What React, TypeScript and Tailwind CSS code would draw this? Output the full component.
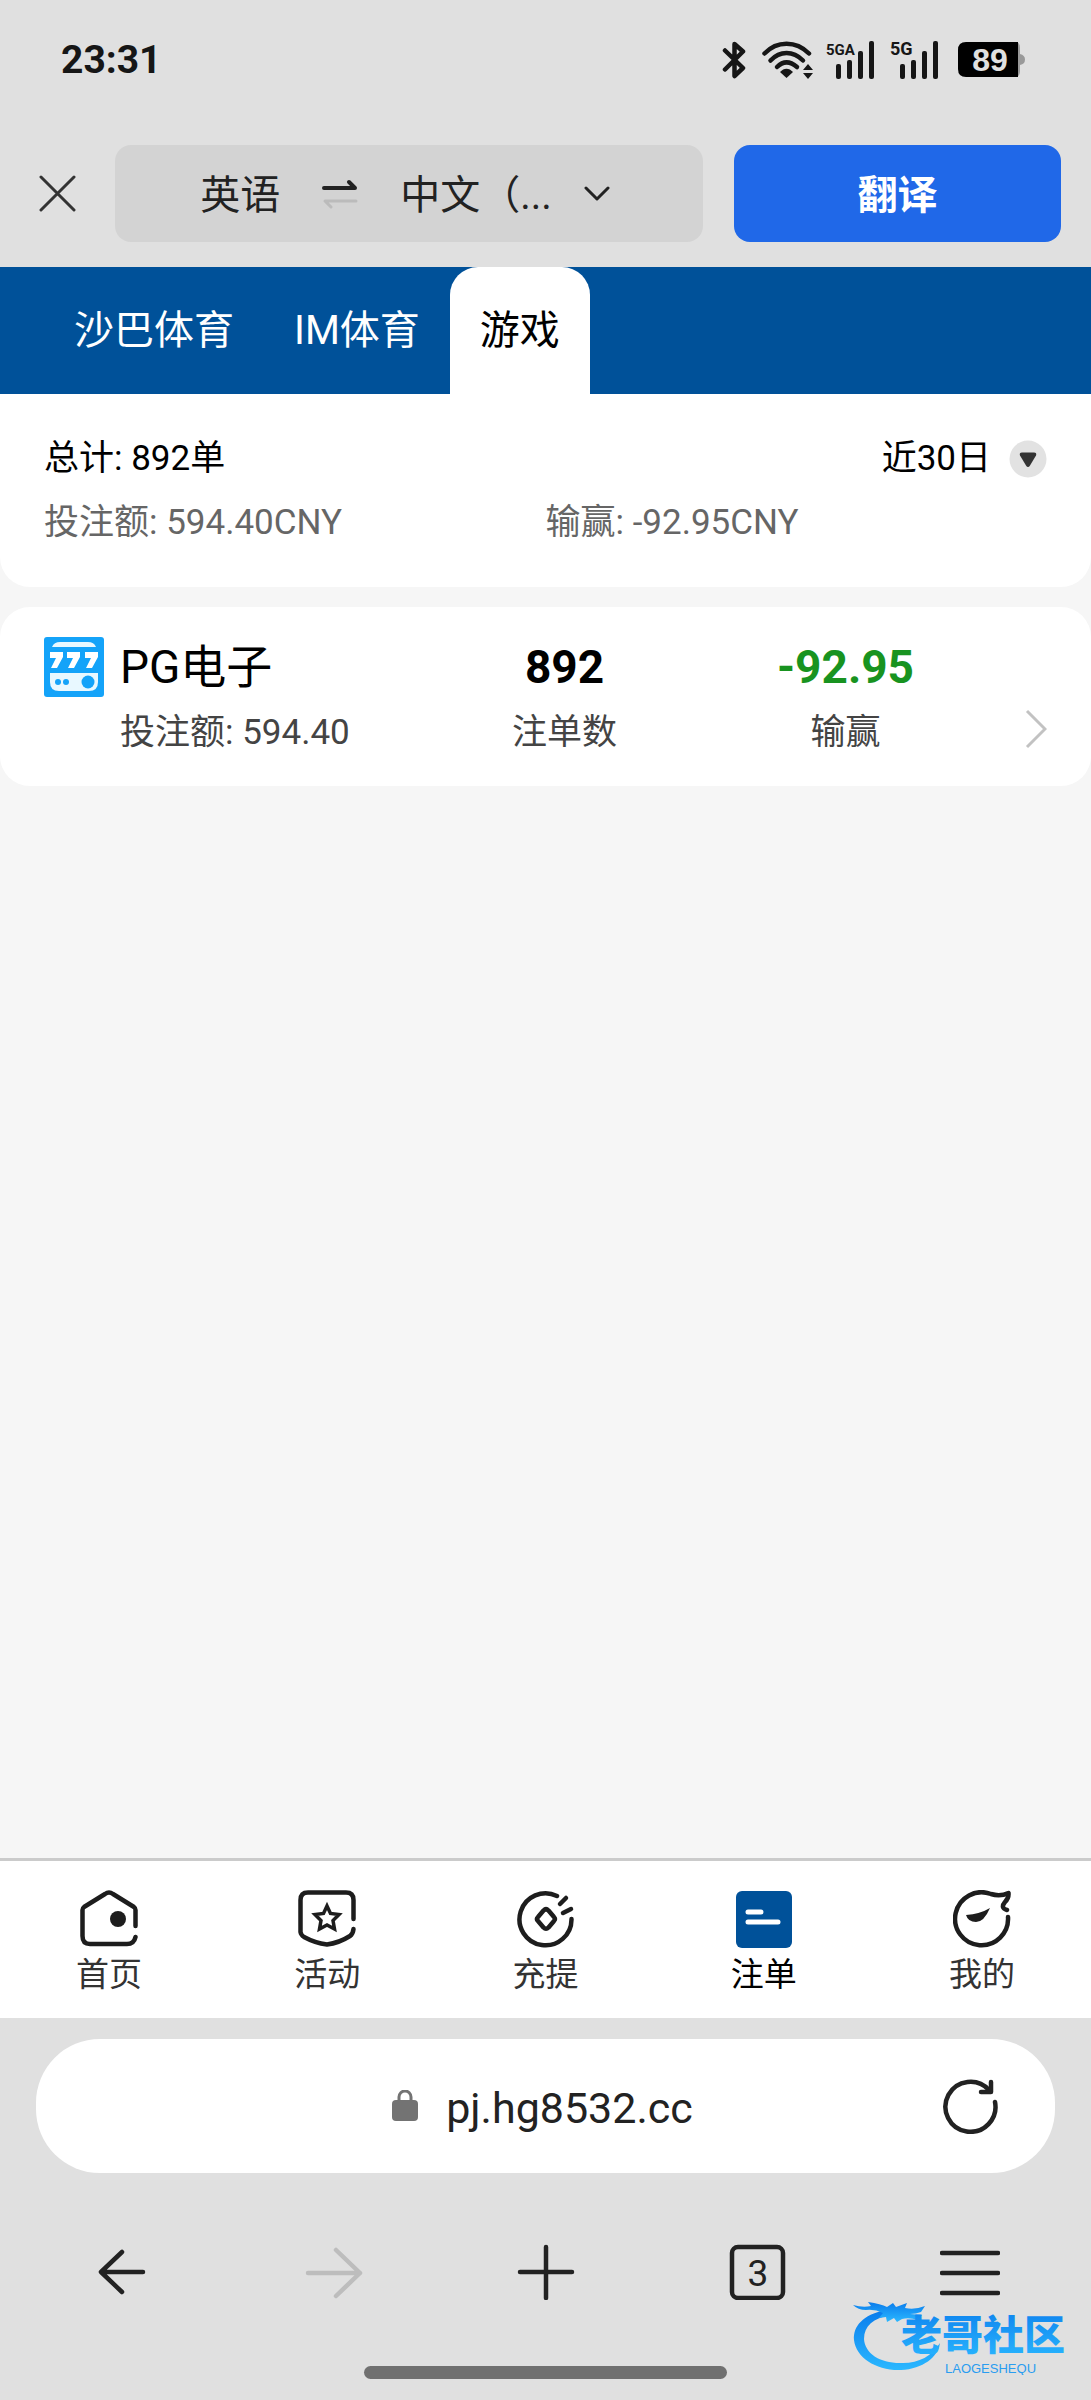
import type { ReactNode } from "react";

function BluetoothIcon() {
  return (
    <svg width="24" height="38" viewBox="0 0 24 38" fill="none" stroke="#161616" strokeWidth="4.500" strokeLinejoin="round" strokeLinecap="round">
      <path d="M3 9.500 21 27 12.500 35V3l8.500 7.500L3 28.500" />
    </svg>
  );
}

function WifiIcon() {
  return (
    <svg width="52" height="38" viewBox="0 0 52 38" fill="none" stroke="#161616" strokeWidth="4.500" strokeLinecap="round">
      <path d="M2.500 12.500C15-.5 34-.5 47 12.500" />
      <path d="M8.500 19.500C18 9.500 31 9.500 41 19.500" />
      <path d="M15 26C21 20 28 20 35 26" />
      <path d="M18 31c4-4.500 9-4.500 13 0l-6.500 6z" fill="#161616" stroke="none" />
      <path d="m41 29 5-6 5 6zM41 32h10l-5 6z" fill="#161616" stroke="none" />
    </svg>
  );
}

function SignalIcon({ label, labelSize }: { label: string; labelSize: number }) {
  return (
    <svg width="48" height="50" viewBox="0 -6 48 50" fill="#161616">
      <text x="0" y="14" fontSize={labelSize} fontWeight="700">
        {label}
      </text>
      <rect x="10" y="23" width="5" height="15" rx="2" />
      <rect x="21" y="19" width="5" height="19" rx="2" />
      <rect x="32" y="10" width="5" height="28" rx="2" />
      <rect x="43" y="0" width="5" height="38" rx="2" />
    </svg>
  );
}

function BatteryIcon() {
  return (
    <svg width="68" height="36" viewBox="0 0 68 36">
      <path d="M54 0h3q5 0 5 6v6q5 1 5 5.500t-5 5.500v6q0 6-5 6h-3z" fill="#999" />
      <path d="M8 0h52v35H8q-8 0-8-8V8q0-8 8-8z" fill="#000" />
      <text x="32" y="29" textAnchor="middle" fontSize="32" fontWeight="700" fill="#e0e0e0" fontFamily="'Liberation Sans', sans-serif">
        89
      </text>
    </svg>
  );
}

function StatusBar() {
  return (
    <div className="flex h-[120px] items-center justify-between pl-[61px] pr-[65px]">
      <span className="text-[39px] font-bold text-[#161616]">23:31</span>
      <div className="flex items-center">
        <BluetoothIcon />
        <span className="ml-4 flex">
          <WifiIcon />
        </span>
        <span className="ml-3 flex">
          <SignalIcon label="5GA" labelSize={15} />
        </span>
        <span className="ml-4 flex">
          <SignalIcon label="5G" labelSize={18} />
        </span>
        <span className="ml-5 flex">
          <BatteryIcon />
        </span>
      </div>
    </div>
  );
}

function TranslateBar() {
  return (
    <div className="flex items-center pb-[25px] pl-[39px] pr-[30px] pt-[25px] text-[40px] leading-none text-[#222]">
      <button aria-label="关闭" className="mr-[39px]">
        <svg width="37" height="37" viewBox="0 0 37 37" stroke="#333" strokeWidth="3" strokeLinecap="round">
          <path d="M2 2 35 35M35 2 2 35" />
        </svg>
      </button>
      <div className="mr-[31px] flex h-[97px] flex-[9] items-center justify-center gap-[42px] rounded-2xl bg-[#d3d3d3]">
        <button className="pt-1">英语</button>
        <button aria-label="交换语言">
          <svg width="36" height="30" viewBox="0 0 36 30" fill="none" strokeLinecap="round" strokeLinejoin="round">
            <path d="M2 9H33L27 3" stroke="#222" strokeWidth="4" />
            <path d="M34 22H3l6 6" stroke="#bbb" strokeWidth="3" />
          </svg>
        </button>
        <button className="flex items-center gap-8 pr-2">
          <span className="pt-1">中文（...</span>
          <svg width="26" height="16" viewBox="0 0 26 16" fill="none" stroke="#222" strokeWidth="3" strokeLinecap="round" strokeLinejoin="round">
            <path d="m2 2 11 11L24 2" />
          </svg>
        </button>
      </div>
      <button className="h-[97px] flex-[5] rounded-2xl bg-[#2068e8] pt-1 font-bold text-white">翻译</button>
    </div>
  );
}

const tabs = ["沙巴体育", "IM体育", "游戏"];

function Tabs() {
  return (
    <div className="flex h-[127px] bg-[#005199] pl-11 text-[40px] leading-none text-white">
      {tabs.map((tab) => (
        <button
          key={tab}
          className={tab === "游戏" ? "rounded-t-[28px] bg-white px-[30px] text-black" : "px-[30px]"}
        >
          {tab}
        </button>
      ))}
    </div>
  );
}

function Summary() {
  return (
    <section className="rounded-b-[30px] bg-white px-11 pb-8 pt-[33px] text-[35px] leading-[64px]">
      <div className="flex items-center justify-between text-black">
        <span>总计: 892单</span>
        <button className="flex items-center gap-[18px]">
          <span>近30日</span>
          <svg width="38" height="38" viewBox="0 0 38 38">
            <circle cx="19" cy="19" r="18.500" fill="#e2e2e2" />
            <path d="M13 12.500h12q3 0 2 3l-6 10q-2 3-4 0l-6-10q-1-3 2-3z" fill="#333" />
          </svg>
        </button>
      </div>
      <div className="grid grid-cols-2 text-[#666]">
        <span>投注额: 594.40CNY</span>
        <span>输赢: -92.95CNY</span>
      </div>
    </section>
  );
}

function SlotIcon() {
  return (
    <svg width="60" height="60" viewBox="0 0 60 60">
      <rect width="60" height="60" rx="3" fill="#14a3f9" />
      <path d="M8 10q2-5 8-5h28q6 0 8 5z" fill="#e8f8ff" />
      <g fill="#fff">
        <path d="M6 15h13v5l-6 11H7l5-10H6z" />
        <path d="M23 15h13v5l-6 11h-6l5-10h-6z" />
        <path d="M41 15h13v5l-6 11h-6l5-10h-6z" />
      </g>
      <path d="M6 36h48v9q0 9-9 9H15q-9 0-9-9z" fill="#e8f8ff" />
      <circle cx="14" cy="45" r="3" fill="#14a3f9" />
      <circle cx="22" cy="45" r="3" fill="#14a3f9" />
      <circle cx="44" cy="45" r="6.500" fill="#14a3f9" />
    </svg>
  );
}

function Stat({ value, label, color }: { value: string; label: string; color: string }) {
  return (
    <div className="flex flex-col items-center">
      <span className={`text-[46px] font-bold leading-[66px] ${color}`}>{value}</span>
      <span className="text-[35px] leading-[66px] text-[#444]">{label}</span>
    </div>
  );
}

function GameRow() {
  return (
    <a
      href="#pg"
      className="mt-5 grid grid-cols-[380fr_281fr_281fr_61fr] rounded-[30px] bg-white px-11 pb-5 pt-[27px]"
    >
      <div>
        <div className="flex h-[66px] items-center gap-4">
          <SlotIcon />
          <span className="text-[46px] text-black">PG电子</span>
        </div>
        <div className="pl-[76px] text-[35px] leading-[66px] text-[#444]">投注额: 594.40</div>
      </div>
      <Stat value="892" label="注单数" color="text-black" />
      <Stat value="-92.95" label="输赢" color="text-[#189320]" />
      <div className="flex items-end justify-end pb-[17px]">
        <svg width="22" height="40" viewBox="0 0 22 40" fill="none" stroke="#c2c2c2" strokeWidth="3">
          <path d="M2 2 20 20 2 38" />
        </svg>
      </div>
    </a>
  );
}

function NavItem({ label, active, children }: { label: string; active?: boolean; children: ReactNode }) {
  return (
    <a href="#nav" className="flex flex-1 flex-col items-center gap-1.5">
      <svg width="58" height="58" viewBox="0 0 58 58" fill="none" stroke="#1d1d1d" strokeWidth="4.500" strokeLinecap="round" strokeLinejoin="round">
        {children}
      </svg>
      <span className={active ? "text-[33px] leading-[42px] text-black" : "text-[33px] leading-[42px] text-[#333]"}>
        {label}
      </span>
    </a>
  );
}

function BottomNav() {
  return (
    <nav className="flex border-t-[3px] border-[#cbcbcb] bg-white pb-[22px] pt-[29px]">
      <NavItem label="首页">
        <path d="M55.500 36V20Q55.500 18 54 17L33 4Q29 1 25 4L4 17Q2.500 18 2.500 20V46Q2.500 54 10 54H47Q54 54 55.500 47" />
        <circle cx="38" cy="29" r="8" fill="#1d1d1d" stroke="none" />
      </NavItem>
      <NavItem label="活动">
        <path d="M55.500 29V10Q55.500 2.500 48 2.500H10Q2.500 2.500 2.500 10V42Q3 45 6 47Q17 53 29 54.500Q41 53 52 46Q55 44 55.500 39" />
        <path d="M29 16l3.500 7.500 8.500 1-6 6 1.500 8.500-7.500-4-7.500 4 1.500-8.500-6-6 8.500-1z" strokeWidth="3.500" strokeLinejoin="miter" />
      </NavItem>
      <NavItem label="充提">
        <path d="M40 6A26 26 0 1 0 54.500 29" />
        <path d="M43 14l6-6M46 23l8-4" />
        <path d="M26.500 20.500Q29 18 31.500 20.500L37 27Q39 29 37 31L31.500 37.500Q29 40 26.500 37.500L21 31Q19 29 21 27z" />
      </NavItem>
      <NavItem label="注单" active>
        <rect x="1" y="1" width="56" height="57" rx="6" fill="#005199" stroke="none" />
        <path d="M13 22h13M13 32h30" stroke="#fff" strokeWidth="5" />
      </NavItem>
      <NavItem label="我的">
        <path d="M55 27A26.500 26.500 0 1 1 38 4Q47 7 55.500 3Q56 8 52 12Q47 18 54 20" />
        <path d="M13 25Q27 24 37 18Q31 32 23 32Q15 32 13 25z" fill="#1d1d1d" stroke="none" />
      </NavItem>
    </nav>
  );
}

function AddressBar() {
  return (
    <div className="mx-9 flex h-[134px] items-center rounded-[64px] bg-white pl-[55px] pr-[57px]">
      <span className="w-[52px]" />
      <button className="flex flex-1 items-center justify-center gap-7">
        <svg width="26" height="32" viewBox="0 0 26 32">
          <rect x="0" y="10" width="26" height="21" rx="4" fill="#737373" />
          <path d="M7 11V7a6 6 0 0 1 12 0v4" fill="none" stroke="#737373" strokeWidth="3" />
        </svg>
        <span className="pt-1 text-[43px] text-[#222]">pj.hg8532.cc</span>
      </button>
      <button aria-label="刷新">
        <svg width="56" height="56" viewBox="0 0 56 56" fill="none" stroke="#222" strokeWidth="4.500" strokeLinecap="round" strokeLinejoin="round">
          <path d="M47 12A25 25 0 1 0 53 24" />
          <path d="M49 4V14H39" />
        </svg>
      </button>
    </div>
  );
}

function ToolButton({ label, disabled, children }: { label: string; disabled?: boolean; children: ReactNode }) {
  return (
    <button aria-label={label} disabled={disabled} className="text-[#222] disabled:text-[#bdbdbd]">
      <svg width="60" height="56" viewBox="0 0 60 56" fill="none" stroke="currentColor" strokeWidth="4.500" strokeLinecap="round" strokeLinejoin="round">
        {children}
      </svg>
    </button>
  );
}

function BrowserTools() {
  return (
    <div className="mt-[71px] flex justify-between pl-[92px] pr-[91px]">
      <ToolButton label="后退">
        <path d="M51 28H9M30 8 9 28 30 48" />
      </ToolButton>
      <ToolButton label="前进" disabled>
        <path d="M4 29H56M32 6 56 29 32 52" />
      </ToolButton>
      <ToolButton label="新建标签页">
        <path d="M4 28H56M30 3V54" />
      </ToolButton>
      <ToolButton label="标签页">
        <rect x="4" y="3" width="51" height="51" rx="6" />
        <text x="30" y="42" textAnchor="middle" fontSize="37" fill="currentColor" stroke="none">
          3
        </text>
      </ToolButton>
      <ToolButton label="菜单">
        <path d="M2 9H58M2 29H58M2 49H58" strokeWidth="4.500" />
      </ToolButton>
    </div>
  );
}

function Watermark() {
  return (
    <svg className="absolute bottom-[25px] right-3" width="228" height="75" viewBox="0 0 228 75">
      <defs>
        <linearGradient id="dragon" x1="0" y1="0" x2="0" y2="1">
          <stop offset="0" stopColor="#0a7cec" />
          <stop offset="1" stopColor="#2bb8ff" />
        </linearGradient>
      </defs>
      <g fill="url(#dragon)">
        <path d="M34 10C12 15 2 26 3 40C5 58 26 71 50 70C72 69 87 57 89 43C81 56 68 63 52 63C30 64 14 54 13 39C13 26 22 18 40 15z" />
        <path d="M2 5Q12 8 20 6L17 2Q30 4 36 7L42 3L45 7L56 3L54 8Q64 10 74 6L70 12Q65 14 59 14L71 15L67 20Q58 17 51 19L46 22L43 18L36 22L35 17L28 18L32 13Q24 9 15 10Q7 10 2 5z" />
        <text x="50" y="50" fontSize="41" fontWeight="900" fontFamily="'Noto Sans CJK SC', sans-serif">
          老哥社区
        </text>
      </g>
      <text x="94" y="73" fontSize="13" fill="#2a9df0" fontFamily="'Liberation Sans', sans-serif">
        LAOGESHEQU
      </text>
    </svg>
  );
}

export default function App() {
  return (
    <div className="flex min-h-screen flex-col bg-[#e0e0e0] font-['Roboto','Noto_Sans_CJK_SC',sans-serif]">
      <header>
        <StatusBar />
        <TranslateBar />
      </header>
      <main className="flex-1 bg-[#f6f6f6]">
        <Tabs />
        <Summary />
        <GameRow />
      </main>
      <BottomNav />
      <footer className="relative pb-[21px] pt-[21px]">
        <AddressBar />
        <BrowserTools />
        <div className="mx-auto mt-[66px] h-[13px] w-1/3 rounded-full bg-[#707070]" />
        <Watermark />
      </footer>
    </div>
  );
}
